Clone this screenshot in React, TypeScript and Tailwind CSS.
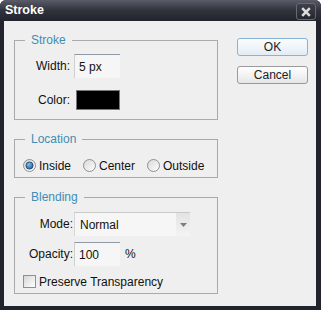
import type { ReactNode } from "react";

function Group({ title, children }: { title: string; children: ReactNode }) {
  return (
    <fieldset className="w-[204px] border border-[#a9a9a9] px-0">
      <legend className="ml-[10px] px-[6px] text-[12px] leading-[14px] text-[#3f8db3]">{title}</legend>
      {children}
    </fieldset>
  );
}

function Radio({ checked }: { checked?: boolean }) {
  return (
    <svg width="13" height="13" viewBox="0 0 13 13" className="shrink-0">
      <defs>
        <linearGradient id={checked ? "rg-on" : "rg-off"} x1="0" y1="0" x2="1" y2="1">
          <stop offset="0" stopColor="#d8d8d8" />
          <stop offset="1" stopColor="#ffffff" />
        </linearGradient>
        <radialGradient id="dot" cx="0.4" cy="0.35" r="0.7">
          <stop offset="0" stopColor="#7fc0f0" />
          <stop offset="1" stopColor="#1d5f9e" />
        </radialGradient>
      </defs>
      <circle cx="6.5" cy="6.5" r="6" fill={checked ? "url(#rg-on)" : "url(#rg-off)"} stroke="#8e8f8f" />
      {checked && <circle cx="6.5" cy="6.5" r="3.6" fill="url(#dot)" stroke="#1b3f66" strokeWidth="0.8" />}
    </svg>
  );
}

function RadioItem({ label, checked, width }: { label: string; checked?: boolean; width: string }) {
  return (
    <label className={`flex h-[13px] items-center gap-[3px] ${width}`}>
      <Radio checked={checked} />
      <span>{label}</span>
    </label>
  );
}

function Field({ value }: { value: string }) {
  return (
    <div className="flex h-[24px] w-[46px] items-center border-l border-t border-l-[#cfcfcf] border-t-[#8f9aa6] bg-[#f6f6f6] pl-[4px]">
      {value}
    </div>
  );
}

function Button({ label, primary }: { label: string; primary?: boolean }) {
  return (
    <button
      type="button"
      className={[
        "h-[18px] w-[71px] rounded-[3px] border text-[12px] leading-none text-[#222]",
        primary
          ? "border-[#86b3d6] bg-gradient-to-b from-[#fbfdff] to-[#e3ecf4]"
          : "border-[#9a9a9a] bg-gradient-to-b from-[#ffffff] to-[#e6e6e6]",
      ].join(" ")}
    >
      {label}
    </button>
  );
}

export default function App() {
  return (
    <div className="flex h-[310px] w-[321px] flex-col overflow-hidden rounded-t-[6px] bg-[#22242d] font-['Liberation_Sans',Arial,sans-serif] text-[12px] text-[#111]">
      {/* title bar */}
      <div className="flex h-[21px] shrink-0 items-center justify-between bg-gradient-to-b from-[#5a5c67] via-[#30323c] to-[#23252e] pl-[5px] pr-[5px]">
        <span className="text-[12.5px] font-bold text-white">Stroke</span>
        <div className="mt-[2px] flex h-[17px] w-[20px] items-center justify-center rounded-[3px] border border-[#676975] bg-gradient-to-b from-[#3e404b] to-[#25272f]">
          <svg width="10" height="10" viewBox="0 0 10 10">
            <path d="M1.2 1.2 L8.8 8.8 M8.8 1.2 L1.2 8.8" stroke="#dcdcdc" strokeWidth="2.6" />
          </svg>
        </div>
      </div>

      {/* body */}
      <div className="mb-[4px] ml-[4px] mr-[5px] flex flex-1 gap-[19px] bg-[#efefef] pl-[10px] pt-[12px]">
        <div className="flex flex-col gap-[12px]">
          <Group title="Stroke">
            <div className="flex flex-col gap-[12px] pb-[9px] pt-[7px]">
              <div className="flex items-center gap-[4px]">
                <span className="w-[55px] text-right">Width:</span>
                <Field value="5 px" />
              </div>
              <div className="flex items-center gap-[4px]">
                <span className="w-[55px] text-right">Color:</span>
                <div className="ml-[2px] h-[20px] w-[44px] border border-[#7a7a7a] bg-black" />
              </div>
            </div>
          </Group>

          <Group title="Location">
            <div className="flex items-center pb-[5px] pl-[8px] pt-[13px]">
              <RadioItem label="Inside" checked width="w-[60px]" />
              <RadioItem label="Center" width="w-[64px]" />
              <RadioItem label="Outside" width="w-[64px]" />
            </div>
          </Group>

          <Group title="Blending">
            <div className="flex flex-col pb-[5px] pt-[8px]">
              <div className="flex items-center">
                <span className="w-[59px] pr-[1px] text-right">Mode:</span>
                <div className="flex h-[24px] w-[116px] items-center justify-between border-l border-t border-l-[#d6d6d6] border-t-[#c9c9c9] bg-[#f6f6f6]">
                  <span className="pl-[5px]">Normal</span>
                  <div className="flex h-full w-[14px] items-center justify-center bg-gradient-to-b from-[#e3e3e3] to-[#f4f4f4]">
                    <svg width="7" height="4" viewBox="0 0 7 4">
                      <path d="M0 0 H7 L3.5 4 Z" fill="#7d7d7d" />
                    </svg>
                  </div>
                </div>
              </div>
              <div className="mt-[6px] flex items-center">
                <span className="w-[59px] pr-[1px] text-right">Opacity:</span>
                <Field value="100" />
                <span className="ml-[5px]">%</span>
              </div>
              <label className="mt-[9px] flex h-[13px] items-center gap-[3px] pl-[8px]">
                <span className="h-[13px] w-[13px] shrink-0 border border-[#8e8f8f] bg-gradient-to-br from-[#d6d6d6] to-[#ffffff]" />
                <span>Preserve Transparency</span>
              </label>
            </div>
          </Group>
        </div>

        <div className="mt-[5px] flex flex-col gap-[10px]">
          <Button label="OK" primary />
          <Button label="Cancel" />
        </div>
      </div>
    </div>
  );
}
